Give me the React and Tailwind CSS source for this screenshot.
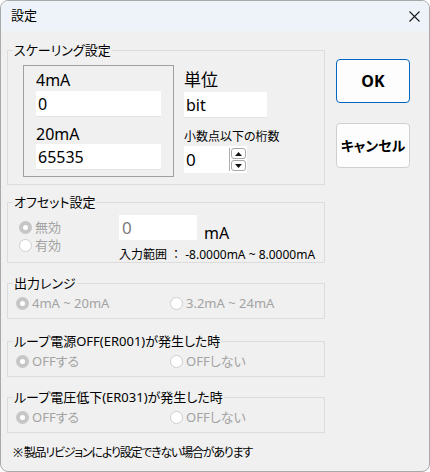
import React from "react";

// group box with the title cut into the top line
const Group = ({ title, className = "", children }) => (
  <fieldset className={`w-[318px] border border-[#dcdcdc] ${className}`}>
    <legend className="ml-[5px] px-[1px] text-[13px] leading-4 text-black">{title}</legend>
    {children}
  </fieldset>
);

const Radio = ({ checked, label, className = "" }) => (
  <div className={`flex h-[18px] items-center gap-[3px] ${className}`}>
    {checked ? (
      <span className="flex h-[13px] w-[13px] items-center justify-center rounded-full bg-[#c6c6c6]">
        <span className="h-[5px] w-[5px] rounded-full bg-white" />
      </span>
    ) : (
      <span className="h-[13px] w-[13px] rounded-full border border-[#cfcfcf] bg-white" />
    )}
    <span className="text-[13px] leading-4 text-[#a3a3a3]">{label}</span>
  </div>
);

const SpinArrow = ({ up }) => (
  <div className="flex h-[11px] w-[15px] items-center justify-center rounded-[3px] border border-[#a8a8a8]">
    <svg width="7" height="4" viewBox="0 0 7 4">
      <path d={up ? "M0 4 L3.5 0 L7 4 Z" : "M0 0 L3.5 4 L7 0 Z"} fill="#111" />
    </svg>
  </div>
);

const Field = ({ value, className = "" }) => (
  <input
    readOnly
    value={value}
    className={`block h-[26px] border-b border-[#e2e2e2] bg-white pl-[2px] text-[16px] leading-[26px] outline-none ${className}`}
  />
);

export default function App() {
  return (
    <div className="flex h-[472px] w-[430px] flex-col overflow-hidden rounded-[8px] border border-[#a9a9a9] bg-[#f0f0f0] font-['Noto_Sans','Noto_Sans_CJK_JP',sans-serif] text-black [font-feature-settings:'palt']">
      {/* title bar */}
      <div className="flex h-[30px] shrink-0 items-center justify-between bg-[#eef3f9] pl-[10px] pr-[9px]">
        <span className="text-[13px]">設定</span>
        <svg width="11" height="11" viewBox="0 0 11 11">
          <path d="M0.5 0.5 L10.5 10.5 M10.5 0.5 L0.5 10.5" stroke="#1a1a1a" strokeWidth="1.1" />
        </svg>
      </div>

      <div className="flex-1 pl-[6px]">
        <div className="mt-[11px] flex items-start">
          <Group title="スケーリング設定">
            <div className="flex pb-[7px] pl-[15px] pt-[7px]">
              <div className="h-[112px] w-[151px] border border-[#a0a0a0] pl-[12px] pt-[4px]">
                <div className="h-5 text-[16px] leading-5">4mA</div>
                <Field value="0" className="mt-px w-[125px]" />
                <div className="mt-[7px] h-5 text-[16px] leading-5">20mA</div>
                <Field value="65535" className="w-[125px]" />
              </div>
              <div className="ml-[10px] pt-[5px]">
                <div className="h-5 text-[17px] leading-5">単位</div>
                <Field value="bit" className="mt-[2px] h-[25px] w-[83px]" />
                <div className="mt-[11px] text-[12px] leading-4">小数点以下の桁数</div>
                <div className="mt-px flex h-[27px] w-[63px] bg-white">
                  <div className="flex-1 pl-[2px] text-[17px] leading-[27px]">0</div>
                  <div className="my-[2px] w-px bg-[#b0b0b0]" />
                  <div className="flex flex-col gap-px px-[1px] py-[2px]">
                    <SpinArrow up />
                    <SpinArrow />
                  </div>
                </div>
              </div>
            </div>
          </Group>

          <div className="ml-[11px] mt-[17px] flex flex-col gap-[20px]">
            <button className="h-[44px] w-[74px] rounded-[4px] border border-[#0067c0] bg-[#fdfdfd] text-[16px] font-bold">
              OK
            </button>
            <button className="h-[45px] w-[74px] rounded-[4px] border border-[#d0d0d0] bg-[#fdfdfd] text-[14px] font-bold">
              キャンセル
            </button>
          </div>
        </div>

        <Group title="オフセット設定" className="mt-[9px]">
          <div className="flex pl-[11px] pt-[5px]">
            <div className="w-[100px] pt-[3px]">
              <Radio checked label="無効" />
              <Radio label="有効" />
            </div>
            <div>
              <div className="flex h-[25px] items-start">
                <div className="h-[25px] w-[78px] bg-white pl-[3px] text-[17px] leading-[25px] text-[#7c7c7c]">0</div>
                <div className="ml-[7px] mt-[8px] text-[16px] leading-5">mA</div>
              </div>
              <div className="mt-[8px] text-[12px] leading-[14px] [font-feature-settings:normal]">
                入力範囲 ： -8.0000mA ~ 8.0000mA
              </div>
            </div>
          </div>
        </Group>

        <Group title="出力レンジ" className="mt-[12px]">
          <div className="flex pb-[6px] pl-[8px] pt-[3px]">
            <Radio checked label="4mA ~ 20mA" className="w-[154px]" />
            <Radio label="3.2mA ~ 24mA" />
          </div>
        </Group>

        <Group title="ループ電源OFF(ER001)が発生した時" className="mt-[14px]">
          <div className="flex pb-[6px] pl-[8px] pt-[3px]">
            <Radio checked label="OFFする" className="w-[154px]" />
            <Radio label="OFFしない" />
          </div>
        </Group>

        <Group title="ループ電圧低下(ER031)が発生した時" className="mt-[12px]">
          <div className="flex pb-[6px] pl-[8px] pt-[3px]">
            <Radio checked label="OFFする" className="w-[154px]" />
            <Radio label="OFFしない" />
          </div>
        </Group>

        <div className="ml-[6px] mt-[12px] text-[12px] leading-4 tracking-[-1.2px]">
          ※ 製品リビジョンにより設定できない場合があります
        </div>
      </div>
    </div>
  );
}
